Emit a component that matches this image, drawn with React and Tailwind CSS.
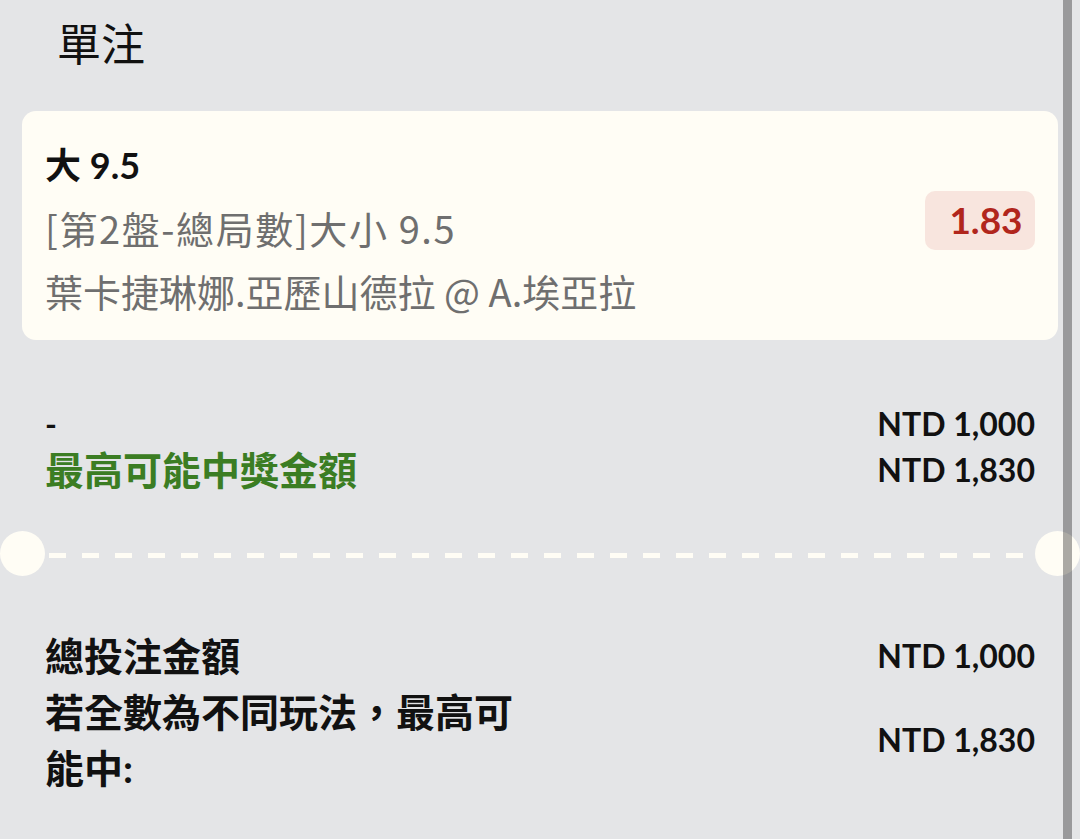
export default function App() {
  return (
    <div className="relative w-[1080px] h-[839px] overflow-hidden bg-[#e4e5e7] text-[#111] font-['Lato','Noto_Sans_CJK_TC',sans-serif]">
      <div className="px-[22px]">
        <div className="h-[111px] pt-[12px] pl-[35px] text-[44px] leading-[60px] font-['Noto_Sans_CJK_TC',sans-serif]">單注</div>
        <div className="flex items-center rounded-[14px] bg-[#fffdf5] px-[23px] pt-[29px] pb-[18px]">
          <div className="flex-1 min-w-0">
            <div className="h-[50px] mb-[6px] leading-[50px] font-bold text-[36px]">
              大 <span className="text-[36px]">9.5</span>
            </div>
            <div className="text-[38px] leading-[63px] tracking-[1.6px] text-[#6f6f6f] font-['Noto_Sans_CJK_TC',sans-serif]">[第2盤-總局數]大小 9.5</div>
            <div className="text-[38px] leading-[63px] text-[#6f6f6f] font-['Noto_Sans_CJK_TC',sans-serif]">葉卡捷琳娜.亞歷山德拉 @ A.埃亞拉</div>
          </div>
          <div className="mb-[22px] flex h-[59px] w-[110px] items-center justify-center rounded-[10px] bg-[#f8e5de] pl-[12px] text-[37px] font-bold text-[#b1261c]">1.83</div>
        </div>
      </div>

      <div className="mt-[61px] grid grid-cols-[1fr_auto] px-[45px] font-bold leading-[46px]">
        <div className="text-[32px]">-</div>
        <div className="text-right text-[32px]">NTD 1,000</div>
        <div className="text-[39px] text-[#3b7d23]">最高可能中獎金額</div>
        <div className="text-right text-[32px]">NTD 1,830</div>
      </div>

      <div className="mt-[38px] flex h-[45px] items-center">
        <div className="h-[45px] w-[45px] shrink-0 rounded-full bg-[#fffdf5]" />
        <div className="mx-[4px] mt-[3px] h-[5px] flex-1 bg-[repeating-linear-gradient(90deg,#fffdf5_0_17px,transparent_17px_33px)]" />
        <div className="h-[45px] w-[45px] shrink-0 rounded-full bg-[#fffdf5]" />
      </div>

      <div className="mt-[52px] grid grid-cols-[480px_1fr] px-[45px] text-[39px] font-bold leading-[56px]">
        <div>總投注金額</div>
        <div className="self-center text-right text-[32px]">NTD 1,000</div>
        <div>若全數為不同玩法，最高可能中:</div>
        <div className="self-center text-right text-[32px]">NTD 1,830</div>
      </div>

      <div className="absolute top-0 bottom-0 left-[1063px] w-[9px] bg-black/[0.33]" />
    </div>
  );
}
